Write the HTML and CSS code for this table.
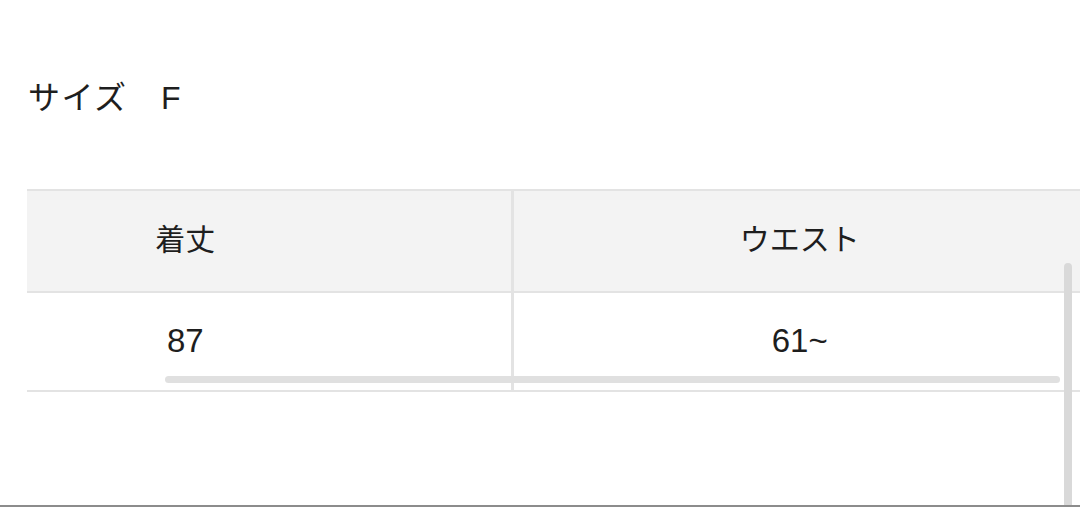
FILE: index.html
```html
<!DOCTYPE html>
<html lang="ja">
<head>
<meta charset="utf-8">
<title>サイズ</title>
<link rel="stylesheet" href="styles.css">
</head>
<body>
<div class="page">
  <div class="title">サイズ　F</div>
  <div class="table-wrap">
    <table class="size-table">
      <colgroup>
        <col class="col-a">
        <col class="col-b">
      </colgroup>
      <thead>
        <tr><th>着丈</th><th>ウエスト</th></tr>
      </thead>
      <tbody>
        <tr><td>87</td><td>61~</td></tr>
      </tbody>
    </table>
    <div class="hscroll"></div>
  </div>
  <div class="vscroll"></div>
</div>
</body>
</html>
```

FILE: styles.css
```css
html, body {
  margin: 0;
  padding: 0;
  background: #ffffff;
}
body {
  font-family: "Liberation Sans", "Noto Sans CJK JP", sans-serif;
  color: #1e1e1e;
}
.page {
  position: relative;
  height: 507px;
  box-sizing: border-box;
  border-bottom: 2px solid #8c8c8c;
  padding-top: 78px;
  overflow: hidden;
}
.title {
  padding-left: 28px;
  font-size: 32px;
  letter-spacing: 1.5px;
  line-height: 40px;
  height: 40px;
}
.table-wrap {
  position: relative;
  margin-top: 71px;
  margin-left: 27px;
  overflow: hidden;
}
.size-table {
  border-collapse: collapse;
  width: 1226px;
  margin-left: -167px;
  table-layout: fixed;
}
.col-a { width: 652px; }
.col-b { width: 574px; }
.size-table th,
.size-table td {
  text-align: center;
  padding: 0;
  border-top: 2px solid #e3e3e3;
  border-bottom: 2px solid #e3e3e3;
  border-left: 3px solid #e3e3e3;
}
.size-table th:first-child,
.size-table td:first-child {
  border-left: none;
}
.size-table th {
  background: #f3f3f3;
  height: 92px;
  padding-bottom: 8px;
  font-weight: normal;
  font-size: 30px;
  font-family: "Noto Sans CJK JP", sans-serif;
}
.size-table td {
  height: 95px;
  padding-bottom: 2px;
  font-size: 33px;
}
.hscroll {
  position: absolute;
  left: 138px;
  top: 187px;
  width: 895px;
  height: 7px;
  border-radius: 4px;
  background: #e0e0e0;
}
.vscroll {
  position: absolute;
  left: 1064px;
  top: 263px;
  width: 8px;
  height: 260px;
  border-radius: 4px;
  background: #d9d9d9;
}
```
